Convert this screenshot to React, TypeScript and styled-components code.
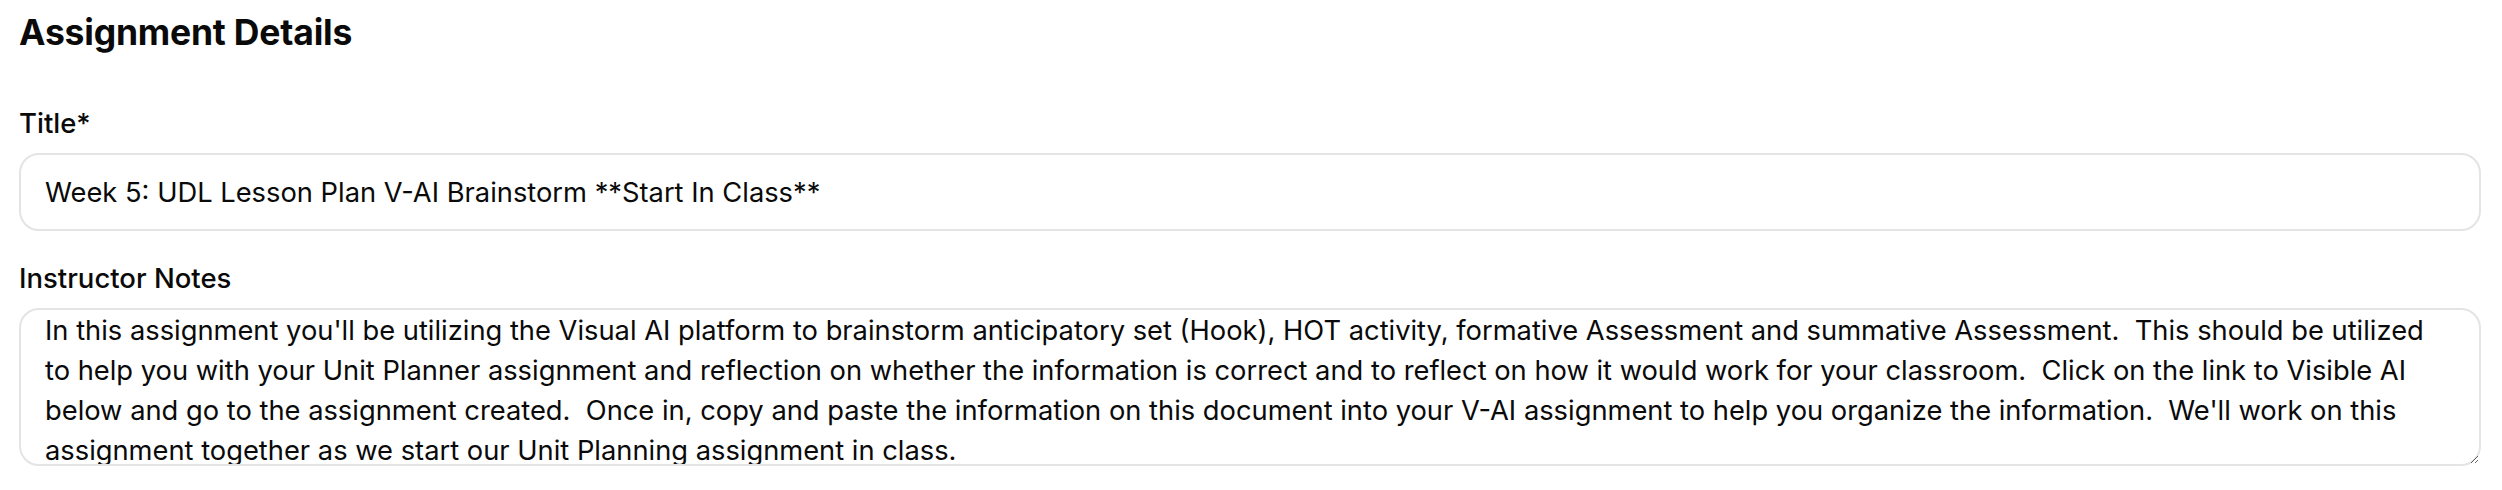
import React from "react";
import styled, { createGlobalStyle } from "styled-components";

const GlobalStyle = createGlobalStyle`
  html, body {
    margin: 0;
    padding: 0;
    background: #ffffff;
  }
  body {
    font-family: Inter, "Noto Sans", "Liberation Sans", sans-serif;
    color: #0a0a0a;
  }
`;

const Page = styled.div`
  display: flex;
  flex-direction: column;
  padding: 11px 21px 0 19px;
`;

const Heading = styled.h2`
  margin: 0;
  font-size: 35.5px;
  line-height: 44px;
  font-weight: 700;
  letter-spacing: -0.2px;
  color: #0a0a0a;
`;

const Field = styled.div<{ $top: number }>`
  display: flex;
  flex-direction: column;
  gap: 14px;
  margin-top: ${(p) => p.$top}px;
`;

const Label = styled.label`
  font-size: 27.5px;
  line-height: 32px;
  font-weight: 500;
  color: #0a0a0a;
`;

const TextInput = styled.input`
  box-sizing: border-box;
  width: 100%;
  height: 78px;
  padding: 0 24px;
  border: 2px solid #e4e4e4;
  border-radius: 20px;
  background: #fff;
  font-family: inherit;
  font-size: 27.3px;
  color: #0a0a0a;
  outline: none;
`;

const NotesArea = styled.textarea`
  box-sizing: border-box;
  width: 100%;
  height: 158px;
  padding: 1px 40px 0 24px;
  border: 2px solid #e4e4e4;
  border-radius: 20px;
  background: #fff;
  font-family: inherit;
  font-size: 27.3px;
  line-height: 40px;
  color: #0a0a0a;
  outline: none;
  overflow: hidden;
  resize: vertical;
`;

const notes =
  "In this assignment you'll be utilizing the Visual AI platform to brainstorm anticipatory set (Hook), HOT activity, formative Assessment and summative Assessment.  This should be utilized to help you with your Unit Planner assignment and reflection on whether the information is correct and to reflect on how it would work for your classroom.  Click on the link to Visible AI below and go to the assignment created.  Once in, copy and paste the information on this document into your V-AI assignment to help you organize the information.  We'll work on this assignment together as we start our Unit Planning assignment in class.";

export default function App() {
  return (
    <>
      <GlobalStyle />
      <Page>
        <Heading>Assignment Details</Heading>
        <Field $top={52}>
          <Label htmlFor="title">Title*</Label>
          <TextInput
            id="title"
            defaultValue="Week 5: UDL Lesson Plan V-AI Brainstorm **Start In Class**"
          />
        </Field>
        <Field $top={31}>
          <Label htmlFor="notes">Instructor Notes</Label>
          <NotesArea id="notes" defaultValue={notes} />
        </Field>
      </Page>
    </>
  );
}
